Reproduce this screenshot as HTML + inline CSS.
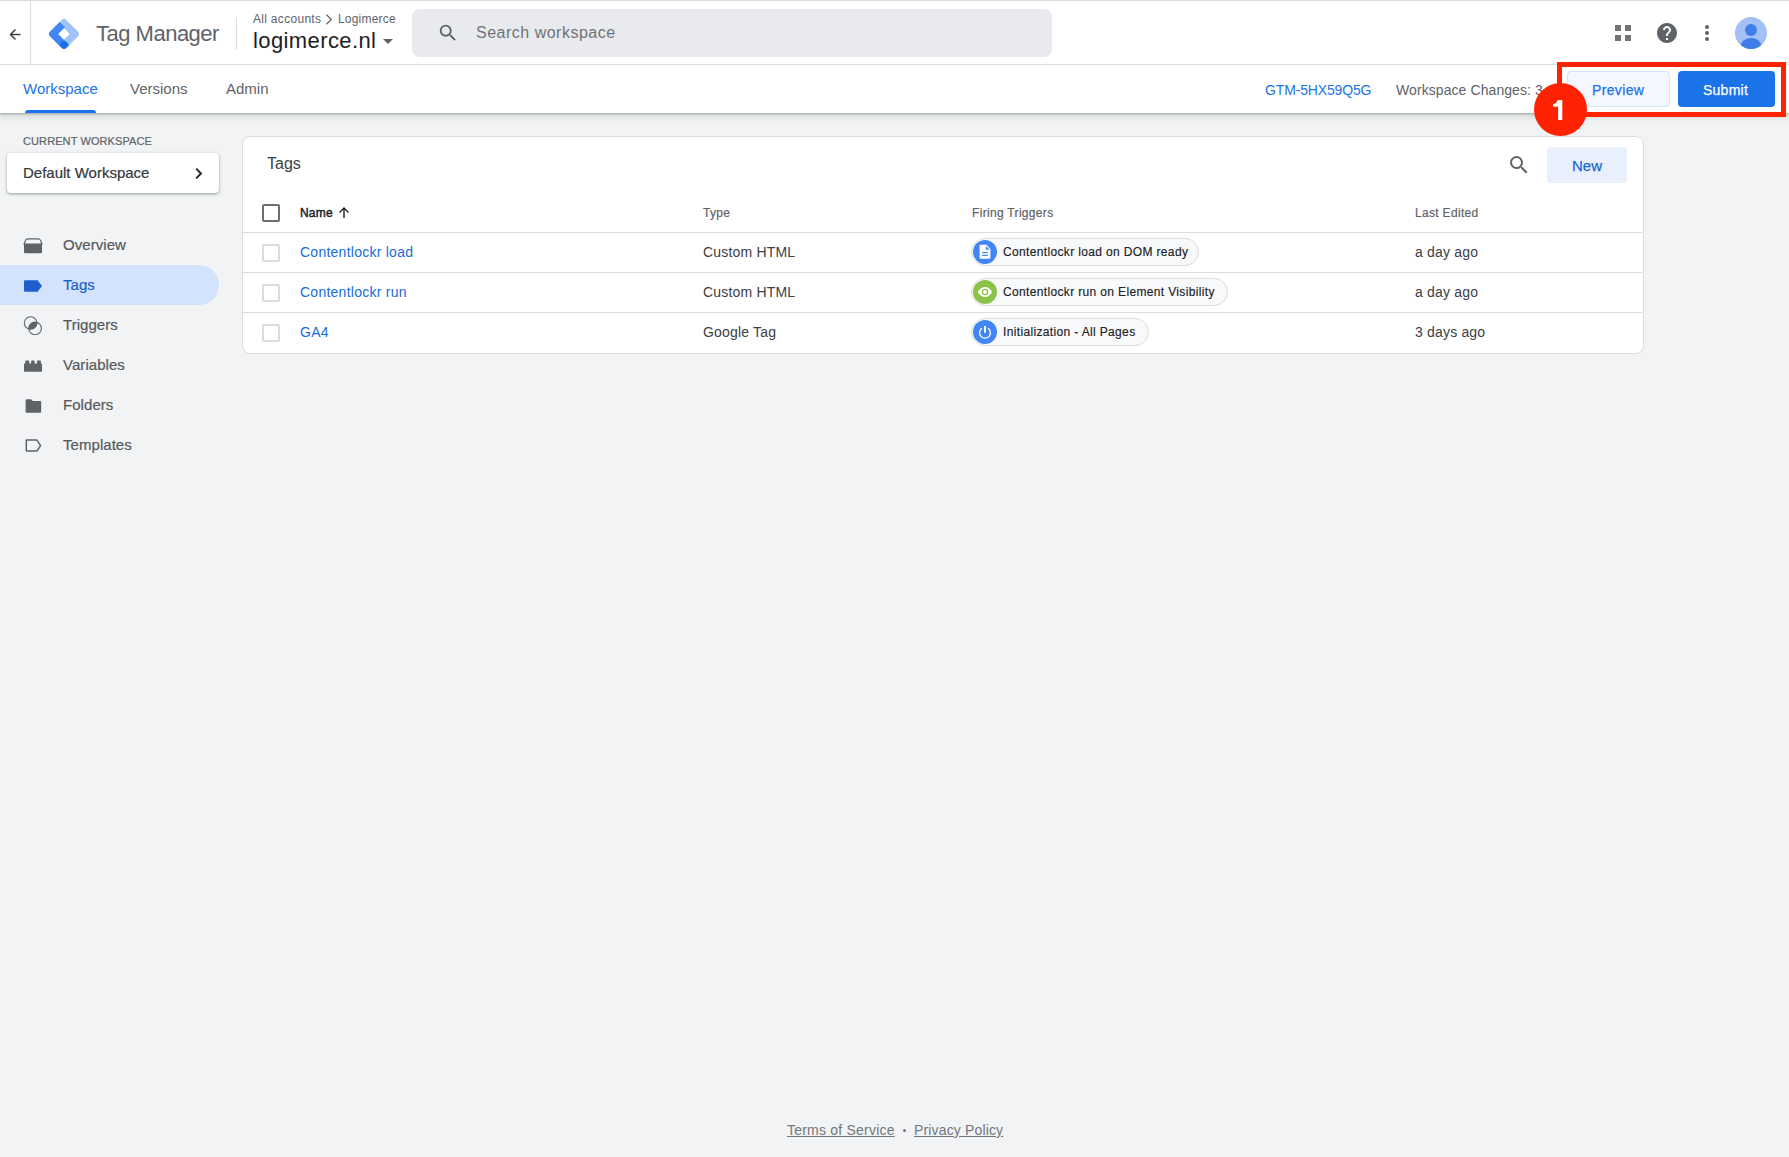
<!DOCTYPE html>
<html><head><meta charset="utf-8">
<style>
*{box-sizing:border-box;margin:0;padding:0}
html,body{width:1789px;height:1157px;overflow:hidden;background:#f1f3f4;font-family:"Liberation Sans",sans-serif;position:relative}
.a{position:absolute;white-space:nowrap}
#hdr{position:absolute;left:0;top:0;width:1789px;height:65px;background:#fff;border-top:1px solid #dadce0;border-bottom:1px solid #dadce0}
#tabs{position:absolute;left:0;top:65px;width:1789px;height:48px;background:#fff;box-shadow:0 1px 2px rgba(60,64,67,.35),0 2px 6px 2px rgba(60,64,67,.15);clip-path:inset(0 0 -30px 0)}
.tab{position:absolute;top:15px;font-size:15px;color:#5f6368}
.nav{position:absolute;left:0;width:219px;height:40px}
.nav .t{position:absolute;left:63px;top:11px;font-size:15px;letter-spacing:.05px;color:#55595e;-webkit-text-stroke:.2px #55595e}
.nav svg{position:absolute;left:23px;top:10px}
#card{position:absolute;left:242px;top:136px;width:1402px;height:218px;background:#fff;border:1px solid #dadce0;border-radius:8px}
.row{position:absolute;left:0;width:1399px;height:40px;border-top:1px solid #dadce0}
.cb{position:absolute;left:19px;width:18px;height:18px;border:2px solid #dadce0;border-radius:2px}
.nm{position:absolute;left:57px;top:11px;font-size:14px;letter-spacing:.25px;color:#1a6ddb}
.ty{position:absolute;left:460px;top:11px;font-size:14px;letter-spacing:.18px;color:#3c4043}
.le{position:absolute;left:1172px;top:11px;font-size:14px;letter-spacing:.18px;color:#3c4043}
.chip{position:absolute;left:728px;top:5px;height:28px;border:1px solid #dadce0;border-radius:14px;background:#f8f9fa}
.chip svg{position:absolute;left:1px;top:1px}
.chip .ct{position:absolute;left:31px;top:6px;font-size:12px;letter-spacing:.35px;color:#202124;-webkit-text-stroke:.15px #202124}
.hd{position:absolute;top:69px;font-size:12px;letter-spacing:.32px;color:#5f6368;-webkit-text-stroke:.2px #5f6368}
</style></head><body>

<div id="hdr">
  <!-- back arrow -->
  <svg class="a" style="left:9px;top:27px" width="13" height="13" viewBox="0 0 13 13"><path d="M11.5 6.5H1.8M6.5 1.5L1.5 6.5l5 5" fill="none" stroke="#3c4043" stroke-width="1.5"/></svg>
  <div class="a" style="left:30px;top:0;width:1px;height:63px;background:#dadce0"></div>
  <!-- logo -->
  <svg class="a" style="left:48px;top:17px" width="32" height="32" viewBox="0 0 32 32">
    <g transform="rotate(45 16 16)">
      <rect x="4.4" y="4.4" width="23.2" height="23.2" rx="3.6" fill="#a1c2f7"/>
      <path d="M4.4 10.5 h7.6 v9.5 h15.6 v4 a3.6 3.6 0 0 1 -3.6 3.6 h-16 a3.6 3.6 0 0 1 -3.6 -3.6 z" fill="#4285f4"/>
      <rect x="12" y="12" width="8" height="8" fill="#fff"/>
      <circle cx="23.6" cy="23.6" r="3.6" fill="#1a6ee6"/>
    </g>
  </svg>
  <div class="a" style="left:96px;top:20px;font-size:22px;letter-spacing:-0.5px;color:#5f6368">Tag Manager</div>
  <div class="a" style="left:236px;top:17px;width:1px;height:32px;background:#dadce0"></div>
  <div class="a" style="left:253px;top:11px;font-size:12px;letter-spacing:.3px;color:#5f6368">All accounts</div><svg class="a" style="left:325px;top:13px" width="8" height="11" viewBox="0 0 8 11"><path d="M1.5 .8L6.3 5.5 1.5 10.2" fill="none" stroke="#5f6368" stroke-width="1.2"/></svg><div class="a" style="left:338px;top:11px;font-size:12px;letter-spacing:.2px;color:#5f6368">Logimerce</div>
  <div class="a" style="left:253px;top:27px;font-size:22px;letter-spacing:.4px;color:#202124">logimerce.nl</div>
  <svg class="a" style="left:382px;top:37px" width="12" height="7" viewBox="0 0 12 7"><path d="M1 1h10L6 6z" fill="#5f6368"/></svg>
  <!-- search -->
  <div class="a" style="left:412px;top:8px;width:640px;height:48px;background:#e8eaed;border-radius:8px"></div>
  <svg class="a" style="left:437px;top:21px" width="22" height="22" viewBox="0 0 24 24"><path d="M15.5 14h-.79l-.28-.27A6.47 6.47 0 0 0 16 9.5 6.5 6.5 0 1 0 9.5 16c1.61 0 3.09-.59 4.23-1.57l.27.28v.79l5 4.99L20.49 19l-4.99-5zm-6 0C7.01 14 5 11.99 5 9.5S7.01 5 9.5 5 14 7.01 14 9.5 11.99 14 9.5 14z" fill="#5f6368"/></svg>
  <div class="a" style="left:476px;top:23px;font-size:16px;letter-spacing:.5px;color:#6f7378">Search workspace</div>
  <!-- right icons -->
  <svg class="a" style="left:1614px;top:23px" width="18" height="18" viewBox="0 0 18 18"><g fill="#737373"><rect x="1" y="1" width="6" height="6"/><rect x="11" y="1" width="6" height="6"/><rect x="1" y="11" width="6" height="6"/><rect x="11" y="11" width="6" height="6"/></g></svg>
  <svg class="a" style="left:1655px;top:20px" width="24" height="24" viewBox="0 0 24 24"><path d="M12 2C6.48 2 2 6.48 2 12s4.48 10 10 10 10-4.48 10-10S17.52 2 12 2zm1 17h-2v-2h2v2zm2.07-7.75l-.9.92C13.45 12.9 13 13.5 13 15h-2v-.5c0-1.1.45-2.1 1.17-2.83l1.24-1.26c.37-.36.59-.86.59-1.41 0-1.1-.9-2-2-2s-2 .9-2 2H8c0-2.21 1.79-4 4-4s4 1.79 4 4c0 .88-.36 1.68-.93 2.25z" fill="#5f6368"/></svg>
  <svg class="a" style="left:1695px;top:20px" width="24" height="24" viewBox="0 0 24 24"><circle cx="12" cy="6" r="2" fill="#5f6368"/><circle cx="12" cy="12" r="2" fill="#5f6368"/><circle cx="12" cy="18" r="2" fill="#5f6368"/></svg>
  <svg class="a" style="left:1735px;top:16px" width="32" height="32" viewBox="0 0 32 32"><defs><clipPath id="av"><circle cx="16" cy="16" r="16"/></clipPath></defs><circle cx="16" cy="16" r="16" fill="#a3c1f5"/><g clip-path="url(#av)" fill="#3f7ee8"><circle cx="16" cy="13" r="6"/><ellipse cx="16" cy="28.5" rx="10" ry="7.5"/></g></svg>
</div>

<div id="tabs">
  <div class="tab" style="left:23px;color:#1a73e8">Workspace</div>
  <div class="a" style="left:25px;top:45px;width:71px;height:3px;background:#1a73e8;border-radius:3px 3px 0 0"></div>
  <div class="tab" style="left:130px">Versions</div>
  <div class="tab" style="left:226px">Admin</div>
  <div class="a" style="left:1265px;top:17px;font-size:14px;letter-spacing:-.15px;color:#1a73e8">GTM-5HX59Q5G</div>
  <div class="a" style="left:1396px;top:17px;font-size:14px;letter-spacing:.08px;color:#5f6368">Workspace Changes: 3</div>
  <div class="a" style="left:1567px;top:6px;width:103px;height:36px;border:1px solid #d2e3fc;background:#f4f8fe;border-radius:4px"></div>
  <div class="a" style="left:1592px;top:17px;font-size:14px;letter-spacing:.35px;-webkit-text-stroke:.25px #1a73e8;color:#1a73e8">Preview</div>
  <div class="a" style="left:1678px;top:6px;width:97px;height:36px;background:#1a73e8;border-radius:4px"></div>
  <div class="a" style="left:1703px;top:17px;font-size:14px;letter-spacing:.25px;-webkit-text-stroke:.25px #fff;color:#fff">Submit</div>
</div>

<!-- sidebar -->
<div class="a" style="left:23px;top:135px;font-size:11px;color:#5f6368;letter-spacing:.1px;-webkit-text-stroke:.2px #5f6368">CURRENT WORKSPACE</div>
<div class="a" style="left:7px;top:153px;width:212px;height:40px;background:#fff;border-radius:4px;box-shadow:0 1px 2px rgba(60,64,67,.3),0 1px 3px 1px rgba(60,64,67,.15)">
  <div class="a" style="left:16px;top:11px;font-size:15px;color:#35393d;-webkit-text-stroke:.2px #35393d">Default Workspace</div>
  <svg class="a" style="left:188px;top:15px" width="10" height="11" viewBox="0 0 10 11"><path d="M1.2 .7L6 5.5 1.2 10.3" fill="none" stroke="#202124" stroke-width="1.9"/></svg>
</div>

<div class="nav" style="top:225px">
  <svg width="20" height="20" viewBox="0 0 20 20"><path d="M2.6 5.2 Q3.2 3.9 4.5 3.9 H15.5 Q16.8 3.9 17.4 5.2 L19 9 H1 Z" fill="none" stroke="#5f6368" stroke-width="1.1"/><path d="M1 9 H19 V17 Q19 18.2 17.8 18.2 H2.2 Q1 18.2 1 17 Z" fill="#5f6368"/></svg>
  <div class="t">Overview</div>
</div>
<div class="nav" style="top:265px;background:#d3e3fd;border-radius:0 20px 20px 0">
  <svg width="20" height="20" viewBox="0 0 20 20"><path d="M1 6.2 Q1 5.2 2 5.2 H14.6 L19 11 L14.6 16.8 H2 Q1 16.8 1 15.8 Z" fill="#1f5fcc"/></svg>
  <div class="t" style="color:#1b5fcf;-webkit-text-stroke:.2px #1b5fcf">Tags</div>
</div>
<div class="nav" style="top:305px">
  <svg width="20" height="20" viewBox="0 0 20 20"><defs><clipPath id="c1"><circle cx="7.6" cy="8" r="6.3"/></clipPath></defs><circle cx="12.1" cy="13.4" r="6.3" fill="#5f6368" clip-path="url(#c1)"/><circle cx="7.6" cy="8" r="6.3" fill="none" stroke="#5f6368" stroke-width="1.1"/><circle cx="12.1" cy="13.4" r="6.3" fill="none" stroke="#5f6368" stroke-width="1.1"/></svg>
  <div class="t">Triggers</div>
</div>
<div class="nav" style="top:345px">
  <svg width="20" height="20" viewBox="0 0 20 20"><path d="M1 9.4 Q1 8.6 1.8 8.6 H2.3 V6.3 Q2.3 5.6 3 5.6 H5.5 Q6.2 5.6 6.2 6.3 V8.6 H8.1 V6.3 Q8.1 5.6 8.8 5.6 H10.9 Q11.6 5.6 11.6 6.3 V8.6 H14 V6.3 Q14 5.6 14.7 5.6 H17.2 Q17.9 5.6 17.9 6.3 V8.6 H18.2 Q19 8.6 19 9.4 V16 Q19 16.8 18.2 16.8 H1.8 Q1 16.8 1 16 Z" fill="#5f6368"/></svg>
  <div class="t">Variables</div>
</div>
<div class="nav" style="top:385px">
  <svg width="20" height="20" viewBox="0 0 20 20"><path d="M2.6 5.2 Q2.6 4.2 3.6 4.2 H8.2 L9.8 5.9 H17.2 Q18.2 5.9 18.2 6.9 V16.7 Q18.2 17.7 17.2 17.7 H3.6 Q2.6 17.7 2.6 16.7 Z" fill="#5f6368"/></svg>
  <div class="t">Folders</div>
</div>
<div class="nav" style="top:425px">
  <svg width="20" height="20" viewBox="0 0 20 20"><path d="M3.3 5.6 Q3.3 5.1 3.8 5.1 H13.9 L17.6 10.6 L13.9 16.1 H3.8 Q3.3 16.1 3.3 15.6 Z" fill="none" stroke="#5f6368" stroke-width="1.5" stroke-linejoin="round"/></svg>
  <div class="t">Templates</div>
</div>

<!-- card -->
<div id="card">
  <div class="a" style="left:24px;top:18px;font-size:16px;color:#3c4043">Tags</div>
  <svg class="a" style="left:1264px;top:16px" width="24" height="24" viewBox="0 0 24 24"><path d="M15.5 14h-.79l-.28-.27A6.47 6.47 0 0 0 16 9.5 6.5 6.5 0 1 0 9.5 16c1.61 0 3.09-.59 4.23-1.57l.27.28v.79l5 4.99L20.49 19l-4.99-5zm-6 0C7.01 14 5 11.99 5 9.5S7.01 5 9.5 5 14 7.01 14 9.5 11.99 14 9.5 14z" fill="#5f6368"/></svg>
  <div class="a" style="left:1304px;top:10px;width:80px;height:36px;background:#e8f0fe;border-radius:4px"></div>
  <div class="a" style="left:1329px;top:20px;font-size:15px;color:#1967d2;-webkit-text-stroke:.25px #1967d2">New</div>

  <div class="cb" style="top:67px;border-color:#6b6f74"></div>
  <div class="hd" style="left:57px;letter-spacing:.2px;color:#202124;-webkit-text-stroke:.45px #202124">Name</div>
  <svg class="a" style="left:95px;top:70px" width="12" height="12" viewBox="0 0 12 12"><path d="M6 11V1M1.5 5.5L6 1l4.5 4.5" fill="none" stroke="#202124" stroke-width="1.4"/></svg>
  <div class="hd" style="left:460px">Type</div>
  <div class="hd" style="left:729px">Firing Triggers</div>
  <div class="hd" style="left:1172px">Last Edited</div>

  <div class="row" style="top:95px">
    <div class="cb" style="top:11px"></div>
    <div class="nm">Contentlockr load</div>
    <div class="ty">Custom HTML</div>
    <div class="chip" style="width:228px"><svg width="24" height="24" viewBox="0 0 24 24"><circle cx="12" cy="12" r="12" fill="#4285f4"/><path d="M7.6 4.8 H13.5 L17.4 9 V17.8 Q17.4 18.8 16.4 18.8 H7.6 Q6.6 18.8 6.6 17.8 V5.8 Q6.6 4.8 7.6 4.8 Z" fill="#fff"/><path d="M12.9 6.1 V9.8 H16.7 Z" fill="#4285f4"/><rect x="9.1" y="12" width="5.7" height="1.2" fill="#4285f4"/><rect x="9.1" y="14.8" width="5.7" height="1.2" fill="#4285f4"/></svg><div class="ct">Contentlockr load on DOM ready</div></div>
    <div class="le">a day ago</div>
  </div>
  <div class="row" style="top:135px">
    <div class="cb" style="top:11px"></div>
    <div class="nm">Contentlockr run</div>
    <div class="ty">Custom HTML</div>
    <div class="chip" style="width:257px"><svg width="24" height="24" viewBox="0 0 24 24"><circle cx="12" cy="12" r="12" fill="#8bc34a"/><path d="M4.8 12 Q8 6.9 12 6.9 Q16 6.9 19.2 12 Q16 17.1 12 17.1 Q8 17.1 4.8 12 Z" fill="#fff"/><circle cx="12" cy="12" r="2.6" fill="none" stroke="#8bc34a" stroke-width="1.3"/></svg><div class="ct">Contentlockr run on Element Visibility</div></div>
    <div class="le">a day ago</div>
  </div>
  <div class="row" style="top:175px">
    <div class="cb" style="top:11px"></div>
    <div class="nm">GA4</div>
    <div class="ty">Google Tag</div>
    <div class="chip" style="width:178px"><svg width="24" height="24" viewBox="0 0 24 24"><circle cx="12" cy="12" r="12" fill="#4285f4"/><path d="M9 8.3 A5.4 5.4 0 1 0 15 8.3" fill="none" stroke="#fff" stroke-width="1.3"/><rect x="11" y="6" width="2" height="6.7" fill="#fff"/></svg><div class="ct">Initialization - All Pages</div></div>
    <div class="le">3 days ago</div>
  </div>
</div>

<!-- annotation -->
<div class="a" style="left:1557px;top:62px;width:229px;height:55px;border:5px solid #ff2200"></div>
<div class="a" style="left:1534px;top:83px;width:53px;height:53px;border-radius:50%;background:#ff2200"></div>
<svg class="a" style="left:1550px;top:98px" width="16" height="24" viewBox="1550 98 16 24"><path d="M1558.1 100 H1562.3 V120 H1558.1 V106.4 Q1555.8 106.7 1553.1 106.8 V104.2 Q1556.6 103.2 1557.9 100 Z" fill="#fff"/></svg>

<!-- footer -->
<div class="a" style="left:787px;top:1122px;font-size:14px;letter-spacing:.22px;color:#73777c;text-decoration:underline">Terms of Service</div>
<div class="a" style="left:903px;top:1129px;width:3px;height:3px;border-radius:50%;background:#73777c"></div>
<div class="a" style="left:914px;top:1122px;font-size:14px;letter-spacing:.15px;color:#73777c;text-decoration:underline">Privacy Policy</div>
</body></html>
